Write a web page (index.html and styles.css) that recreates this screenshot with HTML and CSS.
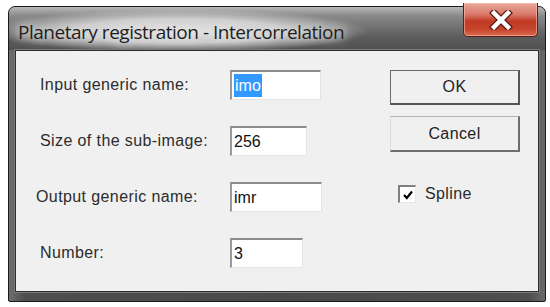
FILE: index.html
```html
<!DOCTYPE html>
<html>
<head>
<meta charset="utf-8">
<title>Planetary registration - Intercorrelation</title>
<link rel="stylesheet" href="styles.css">
</head>
<body>
<div class="window">
  <div class="titlebar">
    <span class="title">Planetary registration - Intercorrelation</span>
    <div class="close">
      <svg width="26" height="20" viewBox="0 0 26 20">
        <path d="M6 3 L20 17 M20 3 L6 17" stroke="#5a1a10" stroke-width="7" stroke-linecap="square"/>
        <path d="M6 3 L20 17 M20 3 L6 17" stroke="#ffffff" stroke-width="4.5" stroke-linecap="square"/>
      </svg>
    </div>
  </div>
  <div class="client">
    <div class="form">
      <div class="row">
        <span class="label">Input generic name:</span>
        <div class="field w1"><span class="sel">imo</span></div>
      </div>
      <div class="row">
        <span class="label">Size of the sub-image:</span>
        <div class="field w2">256</div>
      </div>
      <div class="row row-out">
        <span class="label">Output generic name:</span>
        <div class="field w3">imr</div>
      </div>
      <div class="row">
        <span class="label">Number:</span>
        <div class="field w4">3</div>
      </div>
    </div>
    <div class="side">
      <div class="btn btn-default">OK</div>
      <div class="btn">Cancel</div>
      <div class="check">
        <span class="box">
          <svg width="12" height="12" viewBox="0 0 12 12">
            <path d="M2 6 L4.8 9 L10 2.5" fill="none" stroke="#000" stroke-width="2.2"/>
          </svg>
        </span>
        <span class="check-label">Spline</span>
      </div>
    </div>
  </div>
</div>
</body>
</html>
```
FILE: styles.css
```css
html, body {
  margin: 0;
  padding: 0;
  background: #ffffff;
}

body {
  width: 550px;
  height: 307px;
  overflow: hidden;
}

.window {
  box-sizing: border-box;
  margin: 6px 0 0 8px;
  width: 538px;
  height: 296px;
  border: 1px solid #1a1a1a;
  border-radius: 7px 7px 2px 2px;
  background: linear-gradient(to right, #6e6e6e 0, #4e4e4e 3%, #4a4a4a 50%, #4e4e4e 97%, #6a6a6a 100%);
  padding: 0 6px 9px 6px;
  display: flex;
  flex-direction: column;
}

.titlebar {
  height: 43px;
  display: flex;
  align-items: flex-start;
  justify-content: space-between;
  margin: 0 -6px;
  padding: 0 7px 0 9px;
  border-radius: 6px 6px 0 0;
  background:
    radial-gradient(ellipse 190px 22px at 170px 24px, rgba(235,235,235,0.95) 0, rgba(220,220,220,0.85) 55%, rgba(200,200,200,0) 100%),
    linear-gradient(to bottom, #b8b8b8 0, #8a8a8a 20%, #5c5c5c 70%, #505050 100%);
}

.title {
  font-family: "Open Sans", "Noto Sans", sans-serif;
  font-size: 19px;
  color: #1e1e1e;
  line-height: 24px;
  margin-top: 13px;
  letter-spacing: -0.48px;
  text-shadow: 0 0 8px #e8e8e8, 0 0 12px #dcdcdc;
}

.close {
  box-sizing: border-box;
  width: 75px;
  height: 34px;
  margin-top: -4px;
  border: 1px solid #5b2118;
  border-top: none;
  border-radius: 0 0 5px 5px;
  background: linear-gradient(to bottom, #e9a89a 0, #d9786a 35%, #c03a24 55%, #c8442c 80%, #d86a50 100%);
  box-shadow: inset 0 0 0 1px rgba(255,200,190,0.55);
  display: flex;
  align-items: center;
  justify-content: center;
}

.client {
  flex: 1;
  box-sizing: border-box;
  background: #f0f0f0;
  border: 1px solid #2e2e2e;
  box-shadow: 0 0 0 1px #7a7a7a;
  display: flex;
  font-family: "Liberation Sans", Arial, sans-serif;
  font-size: 16px;
  letter-spacing: 0.4px;
  color: #2c2c2c;
}

.form {
  width: 358px;
  padding: 19px 0 0 24px;
  box-sizing: border-box;
  display: flex;
  flex-direction: column;
  gap: 26px;
}

.row {
  display: flex;
  align-items: center;
  height: 30px;
}

.label {
  width: 190px;
  flex: none;
}

.row-out {
  margin-left: -4px;
}

.row-out .label {
  width: 194px;
}

.field {
  box-sizing: border-box;
  height: 30px;
  background: #ffffff;
  border-top: 2px solid #8c8c8c;
  border-left: 2px solid #9a9a9a;
  border-right: 1px solid #e4e4e4;
  border-bottom: 1px solid #e4e4e4;
  padding: 2px 0 0 2px;
  line-height: 23px;
  letter-spacing: 0;
  color: #111;
}

.w1 { width: 91px; }
.w2 { width: 77px; }
.w3 { width: 92px; }
.w4 { width: 73px; }

.sel {
  display: inline-block;
  background: #3399ff;
  color: #ffffff;
  padding: 0 1px;
  line-height: 23px;
}

.side {
  padding: 19px 0 0 16px;
  display: flex;
  flex-direction: column;
}

.btn {
  box-sizing: border-box;
  width: 130px;
  height: 36px;
  border-top: 1px solid #b4b4b4;
  border-left: 1px solid #dcdcdc;
  border-right: 2px solid #6e6e6e;
  border-bottom: 2px solid #6e6e6e;
  background: #f0f0f0;
  display: flex;
  align-items: center;
  justify-content: center;
  color: #222;
}

.btn-default {
  height: 35px;
  border: 1px solid #6a6a6a;
  border-right: 2px solid #555;
  border-bottom: 2px solid #555;
  margin-bottom: 11px;
}

.check {
  margin-top: 33px;
  margin-left: 8px;
  display: flex;
  align-items: center;
  gap: 9px;
}

.box {
  box-sizing: border-box;
  width: 18px;
  height: 18px;
  background: #ffffff;
  border-top: 2px solid #808080;
  border-left: 2px solid #808080;
  border-right: 1px solid #e8e8e8;
  border-bottom: 1px solid #e8e8e8;
  display: flex;
  align-items: center;
  justify-content: center;
}

.check-label {
  color: #2a2a2a;
}
```
